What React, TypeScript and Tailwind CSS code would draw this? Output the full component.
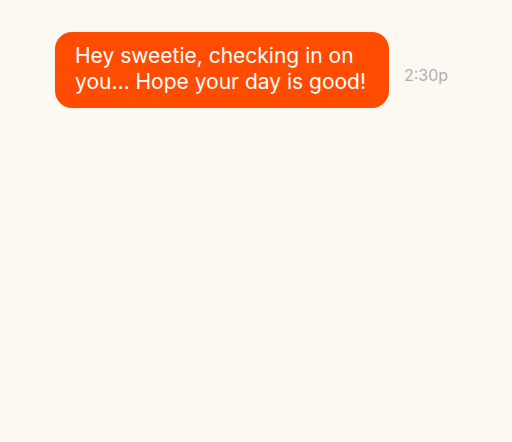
export default function App() {
  return (
    <div className="w-[512px] h-[442px] bg-[#fcf9f3] pt-[32px] pl-[55px]" style={{ fontFamily: 'Inter, "Liberation Sans", sans-serif' }}>
      <div className="flex items-center gap-[15px]">
        <div className="w-[334px] h-[76px] rounded-[17px] bg-[#ff4c00] px-[20px] pt-[11px] text-white text-[21px] leading-[26px]">
          Hey sweetie, checking in on you... Hope your day is good!
        </div>
        <div className="pt-[10px] text-[16px] text-[#b3b0aa]">2:30p</div>
      </div>
    </div>
  );
}
